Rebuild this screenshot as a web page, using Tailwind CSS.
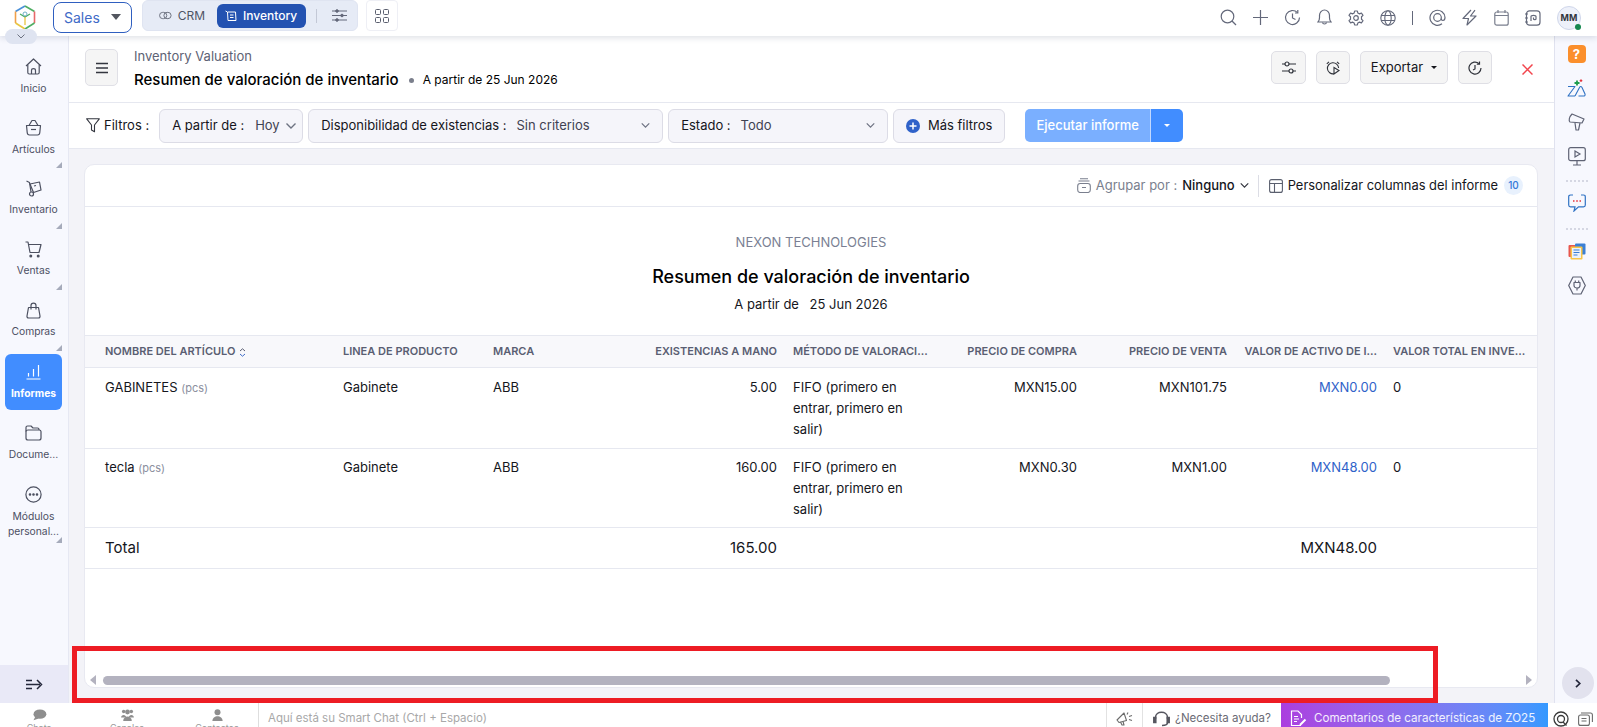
<!DOCTYPE html>
<html lang="es">
<head>
  <meta charset="UTF-8" />
  <title>Resumen de valoración de inventario</title>
  <script src="https://cdn.jsdelivr.net/npm/@tailwindcss/browser@4"></script>
</head>
<body class="w-[1597px] h-[727px] overflow-hidden bg-white font-['Inter',sans-serif] text-[#15161c]">
<div class="relative w-[1597px] h-[727px] flex flex-col overflow-hidden">

  <!-- top bar -->
  <header class="relative z-20 h-9 shrink-0 flex items-center bg-white shadow-[0_2px_6px_rgba(30,40,80,0.14)]">
    <svg class="ml-[14px] w-[22px] h-[25px] -mt-[1px] shrink-0" viewBox="0 0 22 25" fill="none" stroke-width="1.6">
      <path d="M11 1 L1.5 6.5" stroke="#4a90d9"/><path d="M11 1 L20.5 6.5" stroke="#4fae63"/>
      <path d="M1.5 6.5 V18" stroke="#f0a04a"/><path d="M1.5 18 L11 24" stroke="#e8c53f"/>
      <path d="M20.5 6.5 V18" stroke="#e8686a"/><path d="M20.5 18 L11 24" stroke="#4fae63"/>
      <path d="M6 9 L11 12 L16 9" stroke="#4fae63" stroke-width="1.3"/><path d="M11 12 V20" stroke="#e8c53f" stroke-width="1.3"/>
      <circle cx="11" cy="9" r="2" stroke="#6fb0c8" stroke-width="1"/>
    </svg>
    <div class="ml-[17px] w-[79px] h-[31px] -mt-[2px] shrink-0 flex items-center justify-between pl-[10px] pr-[10px] border border-[#2f5fc0] rounded-[8px] text-[#3f6bc7] text-[14px]">
      <span>Sales</span>
      <span class="w-0 h-0 border-l-[5px] border-r-[5px] border-t-[6px] border-l-transparent border-r-transparent border-t-[#53565f]"></span>
    </div>
    <div class="ml-[10px] w-[216px] h-[31px] -mt-[5px] shrink-0 flex items-center bg-[#e6ebf6] rounded-[6px] border border-[#dfe4f1]">
      <div class="ml-[16px] w-[46px] flex items-center gap-[6px] text-[12px] text-[#4f5566]">
        <svg class="w-[13px] h-[9px]" viewBox="0 0 14 10" fill="none" stroke="#6d7281" stroke-width="1.1"><rect x="0.6" y="1.5" width="8" height="7" rx="3.5"/><rect x="5.4" y="1.5" width="8" height="7" rx="3.5"/></svg>
        <span>CRM</span>
      </div>
      <div class="ml-[12px] w-[89px] h-[24px] rounded-[6px] bg-[#2352b1] flex items-center pl-[8px] gap-[6px] text-white text-[12px] font-medium">
        <svg class="w-[12px] h-[12px]" viewBox="0 0 12 12" fill="none" stroke="#fff" stroke-width="1"><path d="M0.5 1 L2.5 2 L3 10.5 H11 L10.5 2 H3"/><path d="M5 5 H8.5 M5 7.5 H8.5"/></svg>
        <span>Inventory</span>
      </div>
      <span class="ml-[10px] w-px h-[14px] bg-[#c3c8d6]"></span>
      <svg class="ml-[15px] w-[15px] h-[13px]" viewBox="0 0 15 13" fill="none" stroke="#63687a" stroke-width="1"><path d="M0 2 H15 M0 6.5 H15 M0 11 H15"/><circle cx="5" cy="2" r="1.3" fill="#63687a"/><circle cx="10" cy="6.5" r="1.3" fill="#63687a"/><circle cx="5" cy="11" r="1.3" fill="#63687a"/></svg>
    </div>
    <div class="ml-[8px] w-[32px] h-[31px] -mt-[5px] shrink-0 flex items-center justify-center border border-[#eeeff5] rounded-[4px]">
      <svg class="w-[14px] h-[14px]" viewBox="0 0 14 14" fill="none" stroke="#5a5f6e" stroke-width="1"><rect x="0.5" y="0.5" width="5" height="5" rx="1"/><rect x="8.5" y="0.5" width="5" height="5" rx="1"/><rect x="0.5" y="8.5" width="5" height="5" rx="1"/><rect x="8.5" y="8.5" width="5" height="5" rx="1"/></svg>
    </div>

    <div class="ml-auto mr-[16px] flex items-center -mt-[1px]">
      <div class="w-8 flex justify-center"><svg class="w-[17px] h-[17px]" viewBox="0 0 17 17" fill="none" stroke="#63687a" stroke-width="1.2"><circle cx="7.5" cy="7.5" r="6.3"/><path d="M12 12 L16 16"/></svg></div>
      <div class="w-8 flex justify-center"><svg class="w-[17px] h-[17px]" viewBox="0 0 17 17" fill="none" stroke="#63687a" stroke-width="1.2"><path d="M8.5 1 V16 M1 8.5 H16"/></svg></div>
      <div class="w-8 flex justify-center"><svg class="w-[17px] h-[17px]" viewBox="0 0 17 17" fill="none" stroke="#63687a" stroke-width="1.2"><path d="M15.5 8.5 A7 7 0 1 1 13.5 3.6"/><path d="M13.8 1 V4 H11"/><path d="M8.5 4.5 V9 L11.5 10.5"/></svg></div>
      <div class="w-8 flex justify-center"><svg class="w-[15px] h-[17px]" viewBox="0 0 15 17" fill="none" stroke="#63687a" stroke-width="1.2"><path d="M1 13 C3 11 2.5 9 2.5 6.5 C2.5 3.5 4.8 1 7.5 1 C10.2 1 12.5 3.5 12.5 6.5 C12.5 9 12 11 14 13 Z"/><path d="M5.5 13.5 C5.8 15.5 9.2 15.5 9.5 13.5"/></svg></div>
      <div class="w-8 flex justify-center"><svg class="w-[16px] h-[16px]" viewBox="0 0 16 16" fill="none" stroke="#63687a" stroke-width="1.2"><circle cx="8" cy="8" r="2.3"/><path d="M6.6 1 H9.4 L9.8 3 L11.6 3.9 L13.4 3 L15 5.4 L13.5 6.8 V9.2 L15 10.6 L13.4 13 L11.6 12.1 L9.8 13 L9.4 15 H6.6 L6.2 13 L4.4 12.1 L2.6 13 L1 10.6 L2.5 9.2 V6.8 L1 5.4 L2.6 3 L4.4 3.9 L6.2 3 Z" stroke-linejoin="round"/></svg></div>
      <div class="w-8 flex justify-center"><svg class="w-[16px] h-[16px]" viewBox="0 0 16 16" fill="none" stroke="#63687a" stroke-width="1.1"><circle cx="8" cy="8" r="7.2"/><ellipse cx="8" cy="8" rx="3.2" ry="7.2"/><path d="M1 5.5 H15 M1 10.5 H15"/></svg></div>
      <span class="mx-[8px] w-px h-[14px] bg-[#63687a]"></span>
      <div class="w-8 flex justify-center"><svg class="w-[17px] h-[17px]" viewBox="0 0 17 17" fill="none" stroke="#63687a" stroke-width="1.2"><path d="M13 14.8 A7.5 7.5 0 1 1 16 8.5 C16 10.5 15 11.5 13.8 11.5 C12.6 11.5 12.3 10.5 12.3 9.5"/><circle cx="8.5" cy="8.5" r="3.8"/></svg></div>
      <div class="w-8 flex justify-center"><svg class="w-[15px] h-[17px]" viewBox="0 0 15 17" fill="none" stroke="#63687a" stroke-width="1.2" stroke-linejoin="round"><path d="M9 1 L1 9.5 H6.5 L5 16 L14 7 H8.5 L13 1.2"/></svg></div>
      <div class="w-8 flex justify-center"><svg class="w-[15px] h-[16px]" viewBox="0 0 15 16" fill="none" stroke="#7a7f8e" stroke-width="1.2"><rect x="0.8" y="2" width="13.4" height="13.2" rx="2"/><path d="M0.8 5.5 H14.2 M4 0 V3 M11 0 V3"/></svg></div>
      <div class="w-8 flex justify-center"><svg class="w-[16px] h-[16px]" viewBox="0 0 16 16" fill="none" stroke="#63687a" stroke-width="1.2"><rect x="1.5" y="0.8" width="13.5" height="14.4" rx="3"/><path d="M0 4 H3 M0 8 H3 M0 12 H3"/><path d="M6 11 V6.5 C6 5 11 5 11 6.5 V9 C11 10 8.5 10 8.5 9 V7.5"/></svg></div>
      <div class="relative ml-[8px] w-[24px] h-[24px] rounded-full bg-[#eef1fa] border border-[#cfd6ea] flex items-center justify-center text-[9px] font-bold text-[#33363f]">MM
        <span class="absolute right-[-1px] bottom-[-1px] w-[6px] h-[6px] rounded-full bg-[#14874f]"></span>
      </div>
    </div>
    <!-- collapse pill under the logo -->
    <div class="absolute left-[5px] top-[29px] w-[32px] h-[15px] rounded-full bg-[#dfe4f1] flex items-center justify-center">
      <svg class="w-[8px] h-[5px]" viewBox="0 0 8 5" fill="none" stroke="#6d7281" stroke-width="1"><path d="M0.5 0.5 L4 4 L7.5 0.5"/></svg>
    </div>
  </header>

  <div class="flex-1 min-h-0 flex">
    <!-- left nav -->
    <aside class="w-[69px] shrink-0 flex flex-col bg-[#f7f8fe] border-r border-[#e6e8f3]">
      <nav class="flex-1 pt-[13px] pl-[5px] pr-[6px] flex flex-col gap-[5px] text-[10.3px] text-[#4c4f63]">
        <div class="relative h-[56px] flex flex-col items-center">
          <svg class="mt-[9px] w-[17px] h-[17px]" viewBox="0 0 17 17" fill="none" stroke="#4c5060" stroke-width="1.2" stroke-linejoin="round"><path d="M1 8 L8.5 1 L16 8"/><path d="M2.8 6.8 V14.5 C2.8 15.5 3.5 16 4.3 16 H12.7 C13.5 16 14.2 15.5 14.2 14.5 V6.8"/><path d="M6.5 16 V12.5 C6.5 10 10.5 10 10.5 12.5 V16"/></svg>
          <span class="mt-[6px] leading-[15px]">Inicio</span>
        </div>
        <div class="relative h-[56px] flex flex-col items-center">
          <svg class="mt-[9px] w-[17px] h-[17px]" viewBox="0 0 17 17" fill="none" stroke="#4c5060" stroke-width="1.2" stroke-linejoin="round"><path d="M1.5 6.5 H15.5 L14.8 13.5 C14.7 15 13.8 16 12.5 16 H4.5 C3.2 16 2.3 15 2.2 13.5 Z"/><path d="M4 6.5 L7 1.5 H10 L13 6.5"/><path d="M6 10.5 H11"/></svg>
          <span class="mt-[6px] leading-[15px]">Artículos</span>
          <span class="absolute right-0 bottom-[-2px] w-0 h-0 border-l-[6px] border-b-[6px] border-l-transparent border-b-[#a6abbb]"></span>
        </div>
        <div class="relative h-[56px] flex flex-col items-center">
          <svg class="mt-[9px] w-[17px] h-[17px]" viewBox="0 0 17 17" fill="none" stroke="#4c5060" stroke-width="1.2" stroke-linejoin="round"><path d="M1.5 1 L4.5 2.5 L6 12"/><circle cx="6.5" cy="14" r="2"/><path d="M5 4 L14.5 2 L16 10 L8.5 12.5 Z"/><path d="M9 6 L11 5.5"/></svg>
          <span class="mt-[5px] leading-[15px]">Inventario</span>
          <span class="absolute right-0 bottom-[-2px] w-0 h-0 border-l-[6px] border-b-[6px] border-l-transparent border-b-[#a6abbb]"></span>
        </div>
        <div class="relative h-[56px] flex flex-col items-center">
          <svg class="mt-[9px] w-[17px] h-[17px]" viewBox="0 0 17 17" fill="none" stroke="#4c5060" stroke-width="1.2" stroke-linejoin="round"><path d="M0.5 1 H3 L5 11.5 H14 L16 3.5 H3.5"/><circle cx="5.8" cy="15" r="0.9" fill="#4c5060"/><circle cx="13.2" cy="15" r="0.9" fill="#4c5060"/></svg>
          <span class="mt-[5px] leading-[15px]">Ventas</span>
          <span class="absolute right-0 bottom-[-2px] w-0 h-0 border-l-[6px] border-b-[6px] border-l-transparent border-b-[#a6abbb]"></span>
        </div>
        <div class="relative h-[56px] flex flex-col items-center">
          <svg class="mt-[9px] w-[17px] h-[17px]" viewBox="0 0 17 17" fill="none" stroke="#4c5060" stroke-width="1.2" stroke-linejoin="round"><path d="M3.5 5.5 H13.5 L15 14 C15.2 15.3 14.4 16 13.4 16 H3.6 C2.6 16 1.8 15.3 2 14 Z"/><path d="M6 7.5 V3.5 C6 0.3 11 0.3 11 3.5 V7.5"/></svg>
          <span class="mt-[5px] leading-[15px]">Compras</span>
          <span class="absolute right-0 bottom-[-2px] w-0 h-0 border-l-[6px] border-b-[6px] border-l-transparent border-b-[#a6abbb]"></span>
        </div>
        <div class="relative h-[56px] flex flex-col items-center rounded-[6px] bg-[#418dff] text-white font-bold">
          <svg class="mt-[10px] w-[15px] h-[16px]" viewBox="0 0 15 16" fill="none" stroke="#fff" stroke-width="1.2"><path d="M0.5 15 H14.5 M2.5 12.5 V9 M7.5 12.5 V5 M12.5 12.5 V1"/></svg>
          <span class="mt-[6px] leading-[15px]">Informes</span>
        </div>
        <div class="relative h-[56px] flex flex-col items-center">
          <svg class="mt-[10px] w-[17px] h-[16px]" viewBox="0 0 17 16" fill="none" stroke="#4c5060" stroke-width="1.2" stroke-linejoin="round"><path d="M1 13 V2.5 C1 1.5 1.7 1 2.5 1 H6 L8 3 H12.5 C13.5 3 14 3.7 14 4.5 V5"/><path d="M1 13 C1 14.5 2 15 3 15 H14 C15 15 16 14.3 16 13 V6.5 C16 5.5 15 5 14 5 H3 C2 5 1 5.5 1 6.5"/></svg>
          <span class="mt-[6px] leading-[15px]">Docume...</span>
        </div>
        <div class="relative h-[67px] flex flex-col items-center text-center">
          <svg class="mt-[10px] w-[17px] h-[17px]" viewBox="0 0 17 17" fill="none" stroke="#4c5060" stroke-width="1.2"><circle cx="8.5" cy="8.5" r="7.6"/><circle cx="5" cy="8.5" r="0.7" fill="#4c5060"/><circle cx="8.5" cy="8.5" r="0.7" fill="#4c5060"/><circle cx="12" cy="8.5" r="0.7" fill="#4c5060"/></svg>
          <span class="mt-[6px] leading-[15px]">Módulos<br>personal...</span>
          <span class="absolute right-0 bottom-0 w-0 h-0 border-l-[6px] border-b-[6px] border-l-transparent border-b-[#a6abbb]"></span>
        </div>
      </nav>
      <div class="h-[38px] shrink-0 bg-[#e9e9f7] flex items-center justify-center">
        <svg class="w-[17px] h-[11px]" viewBox="0 0 17 11" fill="none" stroke="#23263a" stroke-width="1.5"><path d="M0 1.5 H6 M0 5.5 H14 M0 9.5 H6 M11 1 L15.5 5.5 L11 10"/></svg>
      </div>
    </aside>

    <!-- main -->
    <main class="flex-1 min-w-0 flex flex-col bg-[#f3f3f8]">
      <div class="h-[67px] shrink-0 bg-white border-b border-[#e6e8f0] flex items-start pt-[13px] pl-[16px] pr-[19px]">
        <div class="w-[33px] h-[37px] shrink-0 flex items-center justify-center bg-[#f5f5f5] border border-[#e0e0e6] rounded-[5px]">
          <svg class="w-[14px] h-[12px]" viewBox="0 0 14 12" fill="none" stroke="#33363f" stroke-width="1.5"><path d="M1 1.5 H13 M1 6 H13 M1 10.5 H13"/></svg>
        </div>
        <div class="ml-4 -mt-[1px] flex flex-col">
          <span class="text-[13px] leading-[16px] text-[#5d6274] mb-[6px]">Inventory Valuation</span>
          <div class="flex items-center text-black">
            <span class="text-[15px] leading-[20px] font-medium">Resumen de valoración de inventario</span>
            <span class="ml-[10px] w-[5px] h-[5px] rounded-full bg-[#7b7f8c]"></span>
            <span class="ml-[9px] text-[12px]">A partir de 25 Jun 2026</span>
          </div>
        </div>
        <div class="ml-auto mt-[2px] flex items-center">
          <div class="w-[35px] h-[33px] flex items-center justify-center bg-[#f5f5f5] border border-[#dfdfe5] rounded-[5px]">
            <svg class="w-[14px] h-[13px]" viewBox="0 0 14 13" fill="none" stroke="#2f323a" stroke-width="1.2"><path d="M0 3 H3 M7 3 H14 M0 10 H7 M11 10 H14"/><circle cx="5" cy="3" r="2"/><circle cx="9" cy="10" r="2"/></svg>
          </div>
          <div class="ml-[10px] w-[34px] h-[33px] flex items-center justify-center bg-[#f5f5f5] border border-[#dfdfe5] rounded-[5px]">
            <svg class="w-[14px] h-[14px]" viewBox="0 0 14 14" fill="none" stroke="#2f323a" stroke-width="1.1"><path d="M8 12.8 A5.6 5.6 0 1 1 12.6 7"/><path d="M0.8 2.8 L3 0.8 M13.2 2.8 L11 0.8"/><path d="M8 6.5 L13 9.5 L8 13 Z"/></svg>
          </div>
          <div class="ml-[10px] w-[88px] h-[33px] flex items-center justify-center gap-[8px] bg-[#f5f5f5] border border-[#dfdfe5] rounded-[5px] text-[13px] text-[#15161c]">
            <span>Exportar</span>
            <span class="w-0 h-0 border-l-[3px] border-r-[3px] border-t-[3px] border-l-transparent border-r-transparent border-t-[#15161c]"></span>
          </div>
          <div class="ml-[10px] w-[34px] h-[33px] flex items-center justify-center bg-[#f5f5f5] border border-[#dfdfe5] rounded-[5px]">
            <svg class="w-[14px] h-[14px]" viewBox="0 0 14 14" fill="none" stroke="#2f323a" stroke-width="1.2"><path d="M13 7 A6 6 0 1 1 11 2.6"/><path d="M11.5 0.5 V3.2 H8.8"/><path d="M7 4 V8 L5 9"/></svg>
          </div>
          <svg class="ml-[30px] mr-[2px] mt-[3px] w-[11px] h-[11px]" viewBox="0 0 11 11" fill="none" stroke="#f2454d" stroke-width="1.5"><path d="M0.5 0.5 L10.5 10.5 M10.5 0.5 L0.5 10.5"/></svg>
        </div>
      </div>

      <!-- filters -->
      <div class="h-[46px] shrink-0 bg-white border-b border-[#e6e8f0] flex items-center pl-[17px] text-[13px] text-[#15161c]">
        <svg class="w-[14px] h-[15px]" viewBox="0 0 14 15" fill="none" stroke="#33363f" stroke-width="1.1" stroke-linejoin="round"><path d="M0.7 0.8 H13.3 L8.5 7 V13.8 L5.5 12 V7 Z"/></svg>
        <span class="ml-[4px]">Filtros :</span>
        <div class="ml-[10px] w-[144px] h-[34px] flex items-center pl-[12px] pr-[6px] bg-[#f5f5fa] border border-[#dcdce6] rounded-[6px]">
          <span>A partir de :</span><span class="ml-[11px] text-[#3f4252]">Hoy</span>
          <svg class="ml-auto w-[10px] h-[6px]" viewBox="0 0 10 6" fill="none" stroke="#6d7281" stroke-width="1.4"><path d="M0.5 0.5 L5 5 L9.5 0.5"/></svg>
        </div>
        <div class="ml-[5px] w-[355px] h-[34px] flex items-center pl-[12px] pr-[12px] bg-[#f5f5fa] border border-[#dcdce6] rounded-[6px]">
          <span>Disponibilidad de existencias :</span><span class="ml-[10px] text-[#3f4252]">Sin criterios</span>
          <svg class="ml-auto w-[9px] h-[5px]" viewBox="0 0 10 6" fill="none" stroke="#6d7281" stroke-width="1.4"><path d="M0.5 0.5 L5 5 L9.5 0.5"/></svg>
        </div>
        <div class="ml-[5px] w-[220px] h-[34px] flex items-center pl-[12px] pr-[12px] bg-[#f5f5fa] border border-[#dcdce6] rounded-[6px]">
          <span>Estado :</span><span class="ml-[10px] text-[#3f4252]">Todo</span>
          <svg class="ml-auto w-[9px] h-[5px]" viewBox="0 0 10 6" fill="none" stroke="#6d7281" stroke-width="1.4"><path d="M0.5 0.5 L5 5 L9.5 0.5"/></svg>
        </div>
        <div class="ml-[5px] w-[112px] h-[34px] flex items-center justify-center gap-[8px] bg-[#f5f5fa] border border-[#dcdce6] rounded-[6px]">
          <svg class="w-[14px] h-[14px]" viewBox="0 0 14 14"><circle cx="7" cy="7" r="7" fill="#2f62c9"/><path d="M7 3.5 V10.5 M3.5 7 H10.5" stroke="#fff" stroke-width="1.5"/></svg>
          <span>Más filtros</span>
        </div>
        <div class="ml-[20px] w-[158px] h-[33px] flex rounded-[5px] overflow-hidden text-white">
          <div class="w-[126px] flex items-center justify-center bg-[#7aafff] border-r border-[#c2d9ff] font-medium">Ejecutar informe</div>
          <div class="flex-1 flex items-center justify-center bg-[#418dff]"><span class="w-0 h-0 border-l-[3px] border-r-[3px] border-t-[3px] border-l-transparent border-r-transparent border-t-white"></span></div>
        </div>
      </div>

      <!-- report card -->
      <div class="flex-1 min-h-0 pt-[15px] pl-[15px] pr-4 pb-[15px]">
        <div class="h-full flex flex-col bg-white border border-[#e8e9f1] rounded-[10px] overflow-hidden">
          <div class="h-[42px] shrink-0 border-b border-[#e6e8f0] flex items-center justify-end pr-[14px] text-[13px]">
            <svg class="w-[14px] h-[15px]" viewBox="0 0 14 15" fill="none" stroke="#7a7f8e" stroke-width="1.1"><path d="M3 0.8 H11 M1.5 3 H12.5"/><rect x="0.7" y="5.5" width="12.6" height="9" rx="2.5"/><path d="M5 9.5 H9"/></svg>
            <span class="ml-[5px] text-[#7a7f8e]">Agrupar por :</span>
            <span class="ml-[5px] font-medium">Ninguno</span>
            <svg class="ml-[5px] w-[9px] h-[5px]" viewBox="0 0 10 6" fill="none" stroke="#33363f" stroke-width="1.4"><path d="M0.5 0.5 L5 5 L9.5 0.5"/></svg>
            <span class="ml-[9px] w-px h-[22px] bg-[#dcdde5]"></span>
            <svg class="ml-[10px] w-[14px] h-[14px]" viewBox="0 0 14 14" fill="none" stroke="#5a5f6e" stroke-width="1.1"><rect x="0.6" y="0.6" width="12.8" height="12.8" rx="2"/><path d="M0.6 4.5 H13.4 M5.5 4.5 V13.4"/></svg>
            <span class="ml-[5px] text-[12.9px]">Personalizar columnas del informe</span>
            <span class="ml-[6px] w-[19px] h-[19px] rounded-full bg-[#e8f1fd] text-[#3478d8] text-[10px] font-medium flex items-center justify-center">10</span>
          </div>

          <div class="h-[128px] shrink-0 flex flex-col items-center">
            <span class="mt-[26px] text-[13px] leading-[18px] text-[#7a7f93]">NEXON TECHNOLOGIES</span>
            <span class="mt-[14px] text-[18px] leading-[24px] font-medium text-black">Resumen de valoración de inventario</span>
            <span class="mt-[6px] text-[13px] leading-[18px]">A partir de <span class="ml-[7px]">25 Jun 2026</span></span>
          </div>

          <table class="w-full table-fixed border-collapse text-[13px] shrink-0">
            <colgroup>
              <col class="w-[250px]"><col class="w-[150px]"><col class="w-[150px]"><col class="w-[150px]"><col class="w-[150px]"><col class="w-[150px]"><col class="w-[150px]"><col class="w-[150px]"><col>
            </colgroup>
            <thead>
              <tr class="h-[32px] bg-[#f8f8fb] border-y border-[#e6e8f0] text-[11px] font-semibold text-[#5a5e72]">
                <th class="pl-5 pr-2 text-left font-semibold whitespace-nowrap">NOMBRE DEL ARTÍCULO <span class="inline-block align-middle ml-[1px]"><svg class="w-[7px] h-[9px]" viewBox="0 0 7 9" fill="none" stroke-width="1"><path d="M1 3 L3.5 0.8 L6 3" stroke="#5a5e72"/><path d="M1 6 L3.5 8.2 L6 6" stroke="#3f6bc7"/></svg></span></th>
                <th class="px-2 text-left font-semibold whitespace-nowrap">LINEA DE PRODUCTO</th>
                <th class="px-2 text-left font-semibold">MARCA</th>
                <th class="px-2 text-right font-semibold whitespace-nowrap">EXISTENCIAS A MANO</th>
                <th class="px-2 text-left font-semibold whitespace-nowrap">MÉTODO DE VALORACI...</th>
                <th class="px-2 text-right font-semibold whitespace-nowrap">PRECIO DE COMPRA</th>
                <th class="px-2 text-right font-semibold whitespace-nowrap">PRECIO DE VENTA</th>
                <th class="px-2 text-right font-semibold whitespace-nowrap">VALOR DE ACTIVO DE I...</th>
                <th class="px-2 text-left font-semibold whitespace-nowrap">VALOR TOTAL EN INVE...</th>
              </tr>
            </thead>
            <tbody class="leading-[21px]">
              <tr class="h-[81px] border-b border-[#e6e8f0] align-top">
                <td class="pl-5 pr-2 pt-[9px]">GABINETES <span class="text-[11px] text-[#8b8f9e]">(pcs)</span></td>
                <td class="px-2 pt-[9px]">Gabinete</td>
                <td class="px-2 pt-[9px]">ABB</td>
                <td class="px-2 pt-[9px] text-right">5.00</td>
                <td class="px-2 pt-[9px]">FIFO (primero en entrar, primero en salir)</td>
                <td class="px-2 pt-[9px] text-right">MXN15.00</td>
                <td class="px-2 pt-[9px] text-right">MXN101.75</td>
                <td class="px-2 pt-[9px] text-right text-[#2f62c9]">MXN0.00</td>
                <td class="px-2 pt-[9px]">0</td>
              </tr>
              <tr class="h-[79px] border-b border-[#e6e8f0] align-top">
                <td class="pl-5 pr-2 pt-[8px]">tecla <span class="text-[11px] text-[#8b8f9e]">(pcs)</span></td>
                <td class="px-2 pt-[8px]">Gabinete</td>
                <td class="px-2 pt-[8px]">ABB</td>
                <td class="px-2 pt-[8px] text-right">160.00</td>
                <td class="px-2 pt-[8px]">FIFO (primero en entrar, primero en salir)</td>
                <td class="px-2 pt-[8px] text-right">MXN0.30</td>
                <td class="px-2 pt-[8px] text-right">MXN1.00</td>
                <td class="px-2 pt-[8px] text-right text-[#2f62c9]">MXN48.00</td>
                <td class="px-2 pt-[8px]">0</td>
              </tr>
              <tr class="h-[41px] border-b border-[#e6e8f0] text-[15px]">
                <td class="pl-5 pr-2 pb-[2px]">Total</td>
                <td></td><td></td>
                <td class="px-2 pb-[2px] text-right">165.00</td>
                <td></td><td></td><td></td>
                <td class="px-2 pb-[2px] text-right">MXN48.00</td>
                <td></td>
              </tr>
            </tbody>
          </table>

          <!-- horizontal scrollbar -->
          <div class="mt-auto h-[12px] mb-[1px] shrink-0 flex items-center pl-[5px] pr-[5px]">
            <span class="w-0 h-0 border-y-[5px] border-r-[6px] border-y-transparent border-r-[#b3b2bf]"></span>
            <div class="ml-[7px] w-[1287px] h-[9px] rounded-full bg-[#b3b2bf]"></div>
            <span class="ml-auto w-0 h-0 border-y-[5px] border-l-[6px] border-y-transparent border-l-[#b3b2bf]"></span>
          </div>
        </div>
      </div>
    </main>

    <!-- right rail -->
    <aside class="relative w-[43px] shrink-0 flex flex-col items-center bg-[#f7f8fe] border-l border-[#e0e2ef] pl-[1px]">
      <div class="mt-[9px] w-[18px] h-[18px] rounded-[4px] bg-[#fb8f2c] text-white text-[13px] font-bold leading-[18px] text-center">?</div>
      <svg class="mt-[16px] w-[19px] h-[18px]" viewBox="0 0 19 18" fill="none" stroke="#2f72c4" stroke-width="1.1" stroke-linejoin="round"><path d="M1 7.5 H8 L1 17 H8"/><path d="M8 17 L12.5 8.5 C13.5 7 14.5 7.5 15 8.5 L18 15 C18.5 16.5 17.5 17 16.5 17 H11.5"/><path d="M10 1.5 V6.5 M7.5 4 H12.5" stroke="#1f9e4f" stroke-width="1.8"/><path d="M14 0.3 V2.9 M12.7 1.6 H15.3" stroke="#e5343d"/></svg>
      <svg class="mt-[16px] w-[17px] h-[18px]" viewBox="0 0 17 18" fill="none" stroke="#5f6375" stroke-width="1.2" stroke-linejoin="round"><path d="M4 1 L16 6 L14 10 L2 9 C0.5 8 1 4 4 1 Z"/><path d="M7 10 L8 17 H10.5 L12 10"/></svg>
      <svg class="mt-[16px] w-[18px] h-[19px]" viewBox="0 0 18 19" fill="none" stroke="#5f6375" stroke-width="1.2"><rect x="0.7" y="0.7" width="16.6" height="13" rx="2"/><path d="M7 4 L12 7 L7 10 Z M9 14 V18 M5 18 H13"/></svg>
      <div class="mt-[14px] w-[22px] border-t-2 border-dotted border-[#d5d7e3]"></div>
      <svg class="mt-[12px] w-[18px] h-[18px]" viewBox="0 0 18 18" fill="none" stroke="#2f72c4" stroke-width="1.2"><path d="M5 1 H2.5 C1.3 1 0.7 1.7 0.7 2.8 V11 C0.7 12 1.3 12.8 2.5 12.8 H7 L6 17 L10.5 12.8 H15.5 C16.7 12.8 17.3 12 17.3 11 V2.8 C17.3 1.7 16.7 1 15.5 1 H13"/><path d="M5 7 H6.5 M8.2 7 H9.8 M11.5 7 H13" stroke="#e5343d" stroke-width="1.4"/></svg>
      <div class="mt-[16px] w-[22px] border-t-2 border-dotted border-[#d5d7e3]"></div>
      <svg class="mt-[13px] w-[18px] h-[17px]" viewBox="0 0 18 17"><rect x="0.5" y="2" width="11" height="12" rx="1" fill="#e8574e"/><rect x="7" y="0.5" width="10.5" height="11" rx="1" fill="#3a7fd5"/><rect x="2.5" y="3.5" width="12" height="13" rx="1" fill="#f7c64a"/><rect x="4" y="5" width="9" height="10" fill="#eaf2fb"/><path d="M5.5 7 H11.5 M5.5 9.5 H11.5 M5.5 12 H9.5" stroke="#3a7fd5" stroke-width="1"/></svg>
      <svg class="mt-[16px] w-[18px] h-[19px]" viewBox="0 0 18 19" fill="none" stroke="#5f6375" stroke-width="1.2" stroke-linejoin="round"><path d="M5 1 H13 L17.3 9.5 L13 18 H5 L0.7 9.5 Z"/><path d="M6 6.5 H12 V9.5 C12 11 10.5 12 9 12 C7.5 12 6 11 6 9.5 Z M7.3 4.5 V6.5 M10.7 4.5 V6.5 M9 12 V14.5"/></svg>
      <div class="absolute left-[7px] bottom-[4px] w-[32px] h-[32px] rounded-full bg-[#e2e2ee] flex items-center justify-center">
        <svg class="w-[6px] h-[9px]" viewBox="0 0 6 9" fill="none" stroke="#23263a" stroke-width="1.7"><path d="M1 0.8 L4.8 4.5 L1 8.2"/></svg>
      </div>
    </aside>
  </div>

  <!-- bottom bar -->
  <footer class="relative z-10 h-6 shrink-0 bg-white flex overflow-hidden text-[#9a9a9a]">
    <div class="w-[259px] shrink-0 flex border-r border-[#dedede]">
      <div class="w-[78px] flex flex-col items-center text-[9px] leading-[10px]">
        <svg class="mt-[6px] w-[15px] h-[12px] shrink-0" viewBox="0 0 16 14" fill="#8e8e8e"><ellipse cx="8.5" cy="6" rx="7.5" ry="5.5"/><path d="M3 9 L1 13 L7 11 Z"/></svg>
        <span class="mt-[2px]">Chats</span>
      </div>
      <div class="w-[98px] flex flex-col items-center text-[9px] leading-[10px]">
        <svg class="mt-[6px] w-[15px] h-[12px] shrink-0" viewBox="0 0 16 14" fill="#8e8e8e"><circle cx="3.5" cy="3" r="2"/><circle cx="12.5" cy="3" r="2"/><circle cx="8" cy="3.5" r="2.8"/><path d="M0.5 10 C0.5 6 6.5 6 6.5 10 Z M9.5 10 C9.5 6 15.5 6 15.5 10 Z"/><path d="M3 14 C3 7 13 7 13 14 Z"/></svg>
        <span class="mt-[2px]">Canales</span>
      </div>
      <div class="w-[82px] flex flex-col items-center text-[9px] leading-[10px]">
        <svg class="mt-[6px] w-[13px] h-[12px] shrink-0" viewBox="0 0 14 14" fill="#8e8e8e"><circle cx="7" cy="3.8" r="3.5"/><path d="M1 14 C1 6.5 13 6.5 13 14 Z"/></svg>
        <span class="mt-[2px]">Contactos</span>
      </div>
    </div>
    <span class="ml-[9px] pt-[7px] leading-[16px] text-[11.5px] text-[#a8a8a8]">Aquí está su Smart Chat (Ctrl + Espacio)</span>
    <div class="ml-auto flex items-stretch">
      <div class="w-[37px] flex items-center justify-center pt-[7px] border-x border-[#e2e2e2]">
        <svg class="w-[17px] h-[15px]" viewBox="0 0 17 15" fill="none" stroke="#6b6b6b" stroke-width="1.1" stroke-linejoin="round"><path d="M1 9 L8 2 L10.5 9.5 L3 11.5 Z"/><path d="M4.5 11 L6 14 H8 L7 10.5"/><path d="M12 1.5 L11 3.5 M13 5.5 L16 4.5 M13 8.5 L16 9.5"/></svg>
      </div>
      <div class="w-[138px] flex items-center pl-[10px] pt-[7px] text-[11.5px] text-[#6b6b75]">
        <svg class="w-[17px] h-[16px]" viewBox="0 0 17 16" fill="none" stroke="#55565f" stroke-width="1.5"><path d="M2.5 8 V6.5 C2.5 -0.5 14.5 -0.5 14.5 6.5 V8"/><rect x="0.8" y="6.5" width="2" height="5" fill="#55565f"/><rect x="14.2" y="6.5" width="2" height="5" fill="#55565f"/><path d="M14.5 11.5 C14.5 14 12 14.5 9 14.5"/></svg>
        <span class="ml-[5px] whitespace-nowrap">¿Necesita ayuda?</span>
      </div>
      <div class="w-[267px] flex items-center pl-[9px] pt-[7px] bg-gradient-to-r from-[#ab3ddf] to-[#3399ff] text-white/90 text-[11.6px]">
        <svg class="w-[17px] h-[17px]" viewBox="0 0 17 17" fill="none" stroke="#fff" stroke-width="1.2"><path d="M11 15.5 H1.5 V1 H8 L11.5 4.5 V8"/><path d="M4 6.5 H8 M4 9 H9 M4 11.5 H7"/><path d="M10 15 L15.5 9.5"  stroke-width="2"/></svg>
        <span class="ml-[7px] whitespace-nowrap">Comentarios de características de ZO25</span>
      </div>
      <div class="w-[49px] flex items-center justify-center pt-[7px] gap-[9px]">
        <svg class="w-[16px] h-[16px]" viewBox="0 0 16 16" fill="none" stroke="#3a3a3a" stroke-width="1.3"><circle cx="8" cy="8" r="7"/><circle cx="8" cy="8" r="3.5"/><path d="M10 11 L13.5 14.5"/></svg>
        <svg class="w-[15px] h-[14px]" viewBox="0 0 15 14" fill="none" stroke="#6b6b6b" stroke-width="1.1"><rect x="0.6" y="3" width="10.8" height="10.4" rx="2"/><path d="M3 1 H12.5 C13.6 1 14.4 1.8 14.4 3 V10"/><path d="M3.5 6.5 H8.5 M3.5 9 H8.5"/></svg>
      </div>
    </div>
  </footer>

  <!-- red highlight drawn over the screenshot -->
  <div class="absolute z-30 left-[72px] top-[646px] w-[1366px] h-[57px] border-[5px] border-[#ed1c24] pointer-events-none"></div>
</div>
</body>
</html>
